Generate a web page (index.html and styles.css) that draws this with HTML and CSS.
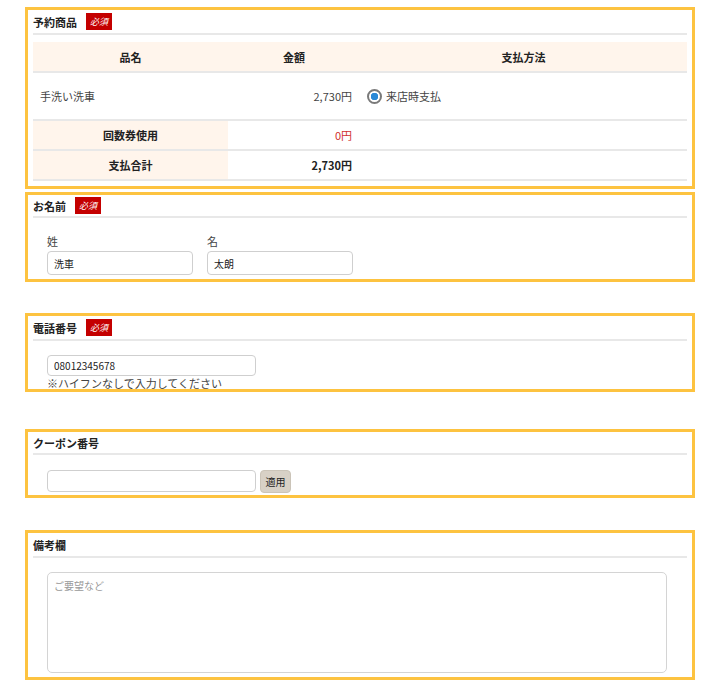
FILE: index.html
```html
<!DOCTYPE html>
<html lang="ja">
<head>
    <meta charset="UTF-8">
    <title>予約フォーム</title>
    <link rel="stylesheet" href="styles.css">
</head>
<body>
<div class="form-wrap">

    <div class="section section-item">
        <div class="section-head">予約商品 <span class="req">必須</span></div>
        <table class="item-table">
            <tr class="head-row">
                <th class="col-name">品名</th>
                <th class="col-price">金額</th>
                <th>支払方法</th>
            </tr>
            <tr class="item-row">
                <td class="item-name">手洗い洗車</td>
                <td class="price">2,730円</td>
                <td><label class="pay"><span class="radio"></span>来店時支払</label></td>
            </tr>
            <tr class="sub-row">
                <th>回数券使用</th>
                <td class="price red">0円</td>
                <td></td>
            </tr>
            <tr class="sub-row">
                <th>支払合計</th>
                <td class="price bold">2,730円</td>
                <td></td>
            </tr>
        </table>
    </div>

    <div class="section section-name">
        <div class="section-head">お名前 <span class="req">必須</span></div>
        <div class="name-row">
            <div class="name-field">
                <label>姓</label>
                <input type="text" class="text-input name-input" value="洗車">
            </div>
            <div class="name-field">
                <label>名</label>
                <input type="text" class="text-input name-input" value="太朗">
            </div>
        </div>
    </div>

    <div class="section section-tel">
        <div class="section-head">電話番号 <span class="req">必須</span></div>
        <div class="field-body">
            <input type="text" class="text-input tel-input" value="08012345678">
            <p class="note">※ハイフンなしで入力してください</p>
        </div>
    </div>

    <div class="section section-coupon">
        <div class="section-head">クーポン番号</div>
        <div class="field-body coupon-row">
            <input type="text" class="text-input coupon-input">
            <button class="apply-btn">適用</button>
        </div>
    </div>

    <div class="section section-memo">
        <div class="section-head">備考欄</div>
        <div class="field-body">
            <textarea class="memo" placeholder="ご要望など"></textarea>
        </div>
    </div>

</div>
</body>
</html>
```

FILE: styles.css
```css
body { margin: 0; background: #fff; color: #444; font-family: "Noto Sans CJK JP", "Liberation Sans", sans-serif; font-size: 11px; }
.form-wrap { width: 670px; padding: 7px 0 0 25px; }

.section {
    border: 3px solid #fdc340;
    padding: 0 5px 3px;
    box-sizing: border-box;
    background: #fff;
}
.section-item { height: 182px; }
.section-name { height: 90px; margin-top: 3px; }
.section-tel { height: 79px; margin-top: 31px; }
.section-coupon { height: 69px; margin-top: 37px; }
.section-memo { height: 150px; margin-top: 32px; }

.section-head {
    display: flex;
    align-items: center;
    gap: 9px;
    height: 23px;
    font-weight: bold;
    font-size: 11px;
    color: #222;
    border-bottom: 2px solid #e8e8e8;
}
.section-name .section-head, .section-coupon .section-head { height: 21px; }
.req {
    display: inline-block;
    background: #c40000;
    color: #fff;
    font-size: 9px;
    font-weight: normal;
    font-style: italic;
    line-height: 17px;
    padding: 0 4px;
}

/* 商品テーブル */
.item-table { width: 100%; border-collapse: collapse; margin-top: 7px; }
.item-table th, .item-table td { border-bottom: 2px solid #e8e8e8; padding: 0; font-size: 11px; }
.head-row th { background: #fff5ec; height: 29px; font-weight: bold; color: #222; }
.col-name { width: 195px; }
.col-price { width: 132px; }
.item-row td { height: 46px; }
.item-name { padding-left: 7px !important; }
.price { text-align: right; padding-right: 8px !important; }
.sub-row th { background: #fff5ec; height: 28px; text-align: center; color: #222; }
.sub-row td { height: 28px; }
.red { color: #d03030; }
.bold { font-weight: bold; color: #222; }

.pay { display: flex; align-items: center; gap: 4px; padding-left: 7px; }
.radio {
    width: 11px; height: 11px;
    border: 2px solid #7a7a7a;
    border-radius: 50%;
    background: radial-gradient(circle, #2a88d6 0 3.5px, #fff 4px);
}

/* お名前 */
.name-row { display: flex; gap: 14px; padding: 15px 0 0 14px; }
.name-field label { display: block; line-height: 16px; margin-bottom: 2px; }
.text-input {
    box-sizing: border-box;
    border: 1px solid #cfcfcf;
    border-radius: 4px;
    font-family: inherit;
    font-size: 10px;
    color: #222;
    padding: 0 6px;
}
.name-input { width: 146px; height: 24px; }

.field-body { padding: 14px 0 0 14px; }
.tel-input { width: 209px; height: 21px; display: block; }
.note { margin: 0; line-height: 14px; font-size: 11px; }

.coupon-row { display: flex; gap: 4px; padding-top: 15px; }
.coupon-input { width: 209px; height: 22px; }
.apply-btn {
    height: 23px;
    width: 31px;
    padding: 0;
    background: #d8d1c6;
    border: 1px solid #cbc4b8;
    border-radius: 4px;
    font-family: inherit;
    font-size: 10px;
    color: #222;
}

.memo {
    box-sizing: border-box;
    width: 620px;
    height: 101px;
    border: 1px solid #d4d4d4;
    border-radius: 5px;
    resize: none;
    padding: 5px 6px;
    font-family: inherit;
    font-size: 10px;
    margin: 0;
    display: block;
}
.memo::placeholder { color: #999; }
```
